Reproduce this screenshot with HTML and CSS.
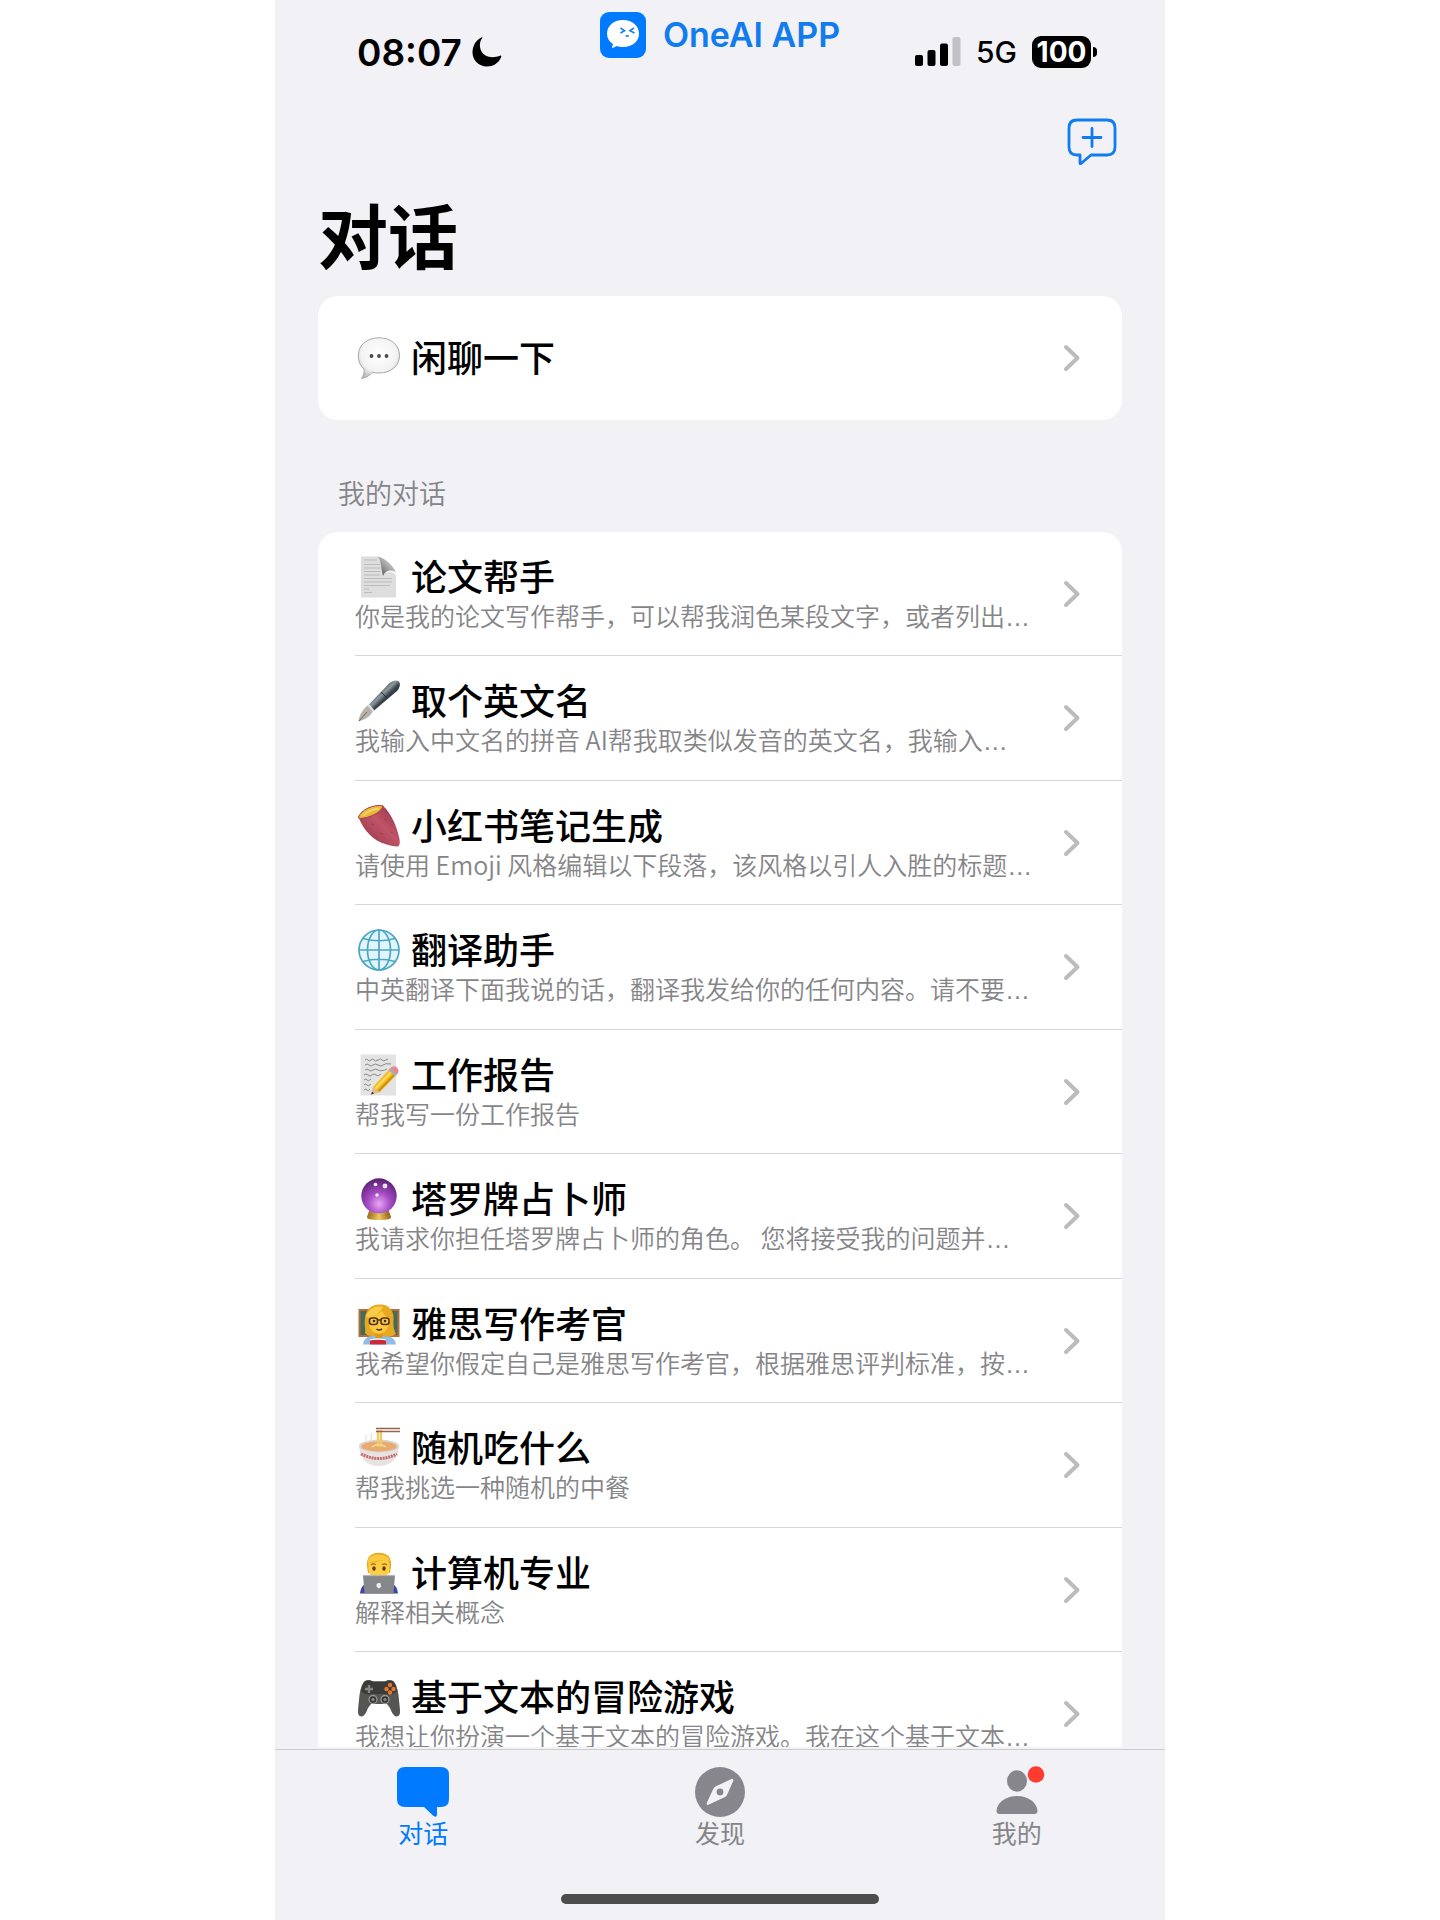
FILE: index.html
```html
<!DOCTYPE html>
<html lang="zh-CN">
<head>
<meta charset="utf-8">
<meta name="viewport" content="width=device-width, initial-scale=1">
<title>OneAI - 对话</title>
<link rel="stylesheet" href="styles.css">
</head>
<body>
<div class="app">
  <div class="screen">
    <header class="status">
      <div class="status-time">
        <time>08:07</time>
        <svg class="moon" viewBox="0 0 30 30" aria-hidden="true"><path d="M10.500 .8C6 6 7.500 15 13.500 18.500C18 21 23.500 20.500 28.500 18.600Q29.600 18.700 29.200 20C26.500 26.500 21 29.500 15 29.500C6.500 29.500 .5 23 .5 15.500C.5 8.500 4 2.800 9.500 .4Q10.600 0 10.500 .8Z"/></svg>
      </div>
      <div class="brand">
        <svg class="brand-logo" viewBox="0 0 46 46" aria-hidden="true">
          <rect width="46" height="46" rx="9" fill="#007aff"/>
          <path d="M23 8C32.500 8 39 14 39 21.700S32.500 35 23 35C20.500 35 18.500 34.600 17 34L12.500 36Q11.800 36.200 12 35.400L13 32C9 29.600 7 26 7 21.700C7 14 13.500 8 23 8Z" fill="#fff"/>
          <path d="M20.500 16L24.500 18.600L20.500 21M34 16L30 18.600L34.500 21M25.500 24H29" fill="none" stroke="#1b7af0" stroke-width="1.600"/>
        </svg>
        <span>OneAI APP</span>
      </div>
      <div class="status-icons">
        <svg class="signal" viewBox="0 0 46 30" aria-hidden="true"><rect x="0" y="18" width="8" height="11" rx="2"/><rect x="12.500" y="13" width="8" height="16" rx="2"/><rect x="25" y="6.500" width="8" height="22.500" rx="2"/><rect x="37.500" y="0" width="8" height="29" rx="2" fill="#c1c1c6"/></svg>
        <span class="network">5G</span>
        <span class="battery">100</span>
      </div>
    </header>

    <main class="content">
      <nav class="toolbar">
        <button class="compose" type="button" aria-label="新建对话">
          <svg viewBox="0 0 50 48" aria-hidden="true"><path d="M10 2H40Q48 2 48 10V29Q48 37 40 37H24L14 45.500Q13 46 13 45V37H10Q2 37 2 29V10Q2 2 10 2ZM25 10.500V28.500M16 19.500H34" fill="none" stroke="#0f7cf0" stroke-width="2.800" stroke-linecap="round" stroke-linejoin="round"/></svg>
        </button>
      </nav>
      <h1 class="title">对话</h1>

      <ul class="card">
        <li class="row row-single"><a href="#chat">
          <span class="row-title">
            <svg class="emoji" viewBox="0 0 46 42" aria-hidden="true">
              <defs><radialGradient id="bubble" cx=".5" cy=".4" r=".62"><stop offset="0" stop-color="#fff"/><stop offset=".7" stop-color="#f3f3f3"/><stop offset="1" stop-color="#bdbdbd"/></radialGradient></defs>
              <path d="M24 .8C36 .8 44.500 8 44.500 18.500S36 36 24 36C21.500 36 19.500 35.800 17.500 35.200C14.500 38.500 11 41 6.500 41.500C8.500 38.500 9.500 35.500 9 32C5.500 29 3.300 24.500 3.300 18.500C3.300 8 12 .8 24 .8Z" fill="url(#bubble)" stroke="#a9a9a9" stroke-width="1"/>
              <g fill="#4a4a4a"><circle cx="16.500" cy="19" r="1.900"/><circle cx="24" cy="19" r="1.900"/><circle cx="31.500" cy="19" r="1.900"/></g>
            </svg>
            <span class="row-name">闲聊一下</span></span>
          <svg class="chevron" viewBox="0 0 16 26" aria-hidden="true"><path d="M2 2L13.500 13L2 24"/></svg>
        </a></li>
      </ul>

      <h2 class="section">我的对话</h2>

      <ul class="card card-list">
        <li class="row"><a href="#paper">
          <span class="row-title">
            <svg class="emoji" viewBox="0 0 46 42" aria-hidden="true">
              <defs><linearGradient id="curl" x1="0" y1="1" x2="1" y2="0"><stop offset="0" stop-color="#444"/><stop offset=".5" stop-color="#a5a5a5"/><stop offset="1" stop-color="#f0f0f0"/></linearGradient></defs>
              <path d="M6 .5H23Q27 1 27.500 8L28 19Q35 12.500 41 19V41.500H6Z" fill="#dedede"/>
              <path d="M9 4H22M9 8.500H25M9 12H25M9 15.500H25M9 19H25M9 22.500H37M9 26H37M9 29.500H35M9 33H14M9 36.500H17" stroke="#bcbcbc" stroke-width="1"/>
              <path d="M22 .5C26 2 25.500 10 28 20C31 14 37 13 41 17C39 10 29 1 22 .5Z" fill="url(#curl)"/>
            </svg>
            <span class="row-name">论文帮手</span></span>
          <span class="row-sub">你是我的论文写作帮手，可以帮我润色某段文字，或者列出<span class="more">…</span></span>
          <svg class="chevron" viewBox="0 0 16 26" aria-hidden="true"><path d="M2 2L13.500 13L2 24"/></svg>
        </a></li>
        <li class="row"><a href="#name">
          <span class="row-title">
            <svg class="emoji" viewBox="0 0 46 42" aria-hidden="true">
              <defs><linearGradient id="pen" x1=".2" y1=".3" x2=".7" y2=".8"><stop offset="0" stop-color="#2d363c"/><stop offset=".4" stop-color="#8d989f"/><stop offset=".6" stop-color="#39444b"/><stop offset="1" stop-color="#1f272d"/></linearGradient></defs>
              <path d="M14 25L18 31C15 37 10 39.500 3.500 41.500C4 35.500 8 28 14 25Z" fill="#b9b1a9"/>
              <path d="M4 41L12 32" stroke="#6f6962" stroke-width="1"/>
              <path d="M13.500 25L34 3.500Q40-1.500 44 1.500Q46.500 6 42 11L18.500 31Z" fill="url(#pen)"/>
              <path d="M13.500 25L18.500 31" stroke="#dfe3e5" stroke-width="2"/><path d="M26 12L32 18" stroke="#232b30" stroke-width="1"/>
            </svg>
            <span class="row-name">取个英文名</span></span>
          <span class="row-sub">我输入中文名的拼音 AI帮我取类似发音的英文名，我输入<span class="more">…</span></span>
          <svg class="chevron" viewBox="0 0 16 26" aria-hidden="true"><path d="M2 2L13.500 13L2 24"/></svg>
        </a></li>
        <li class="row"><a href="#notes">
          <span class="row-title">
            <svg class="emoji" viewBox="0 0 46 42" aria-hidden="true">
              <defs><linearGradient id="potato" x1="0" y1="1" x2="1" y2="0"><stop offset="0" stop-color="#8e2f42"/><stop offset=".55" stop-color="#c05468"/><stop offset="1" stop-color="#8a3145"/></linearGradient></defs>
              <path d="M3.500 12C7 22 15 33 26 37.500C33 40 38 41.500 43 41.500Q45.500 40 44.500 34C42 22 36 8 28 .8Z" fill="url(#potato)"/>
              <path d="M3.500 12C6 5 18-1 28 .8C27 7 15 13 5 13.500Q3 13.500 3.500 12Z" fill="#e9b83a" stroke="#a8404d" stroke-width="1"/>
              <path d="M8 10.500C13 6 18 4 24 3.500" fill="none" stroke="#f5d568" stroke-width="2"/>
              <path d="M16 19L19 20M29 14L32 15M25 28L28 29M36 27L38 28" stroke="#a03c50" stroke-width="1"/>
            </svg>
            <span class="row-name">小红书笔记生成</span></span>
          <span class="row-sub">请使用 Emoji 风格编辑以下段落，该风格以引人入胜的标题<span class="more">…</span></span>
          <svg class="chevron" viewBox="0 0 16 26" aria-hidden="true"><path d="M2 2L13.500 13L2 24"/></svg>
        </a></li>
        <li class="row"><a href="#translate">
          <span class="row-title">
            <svg class="emoji" viewBox="0 0 46 42" aria-hidden="true">
              <g fill="none" stroke="#4ba6c4" stroke-width="1.700"><circle cx="24" cy="21" r="20" fill="#e3f5fc"/><ellipse cx="24" cy="21" rx="11.500" ry="20"/><path d="M24 1V41M4 21H44M8 9.500Q24 14 40 9.500M8 32.500Q24 28 40 32.500"/></g>
            </svg>
            <span class="row-name">翻译助手</span></span>
          <span class="row-sub">中英翻译下面我说的话，翻译我发给你的任何内容。请不要<span class="more">…</span></span>
          <svg class="chevron" viewBox="0 0 16 26" aria-hidden="true"><path d="M2 2L13.500 13L2 24"/></svg>
        </a></li>
        <li class="row"><a href="#report">
          <span class="row-title">
            <svg class="emoji" viewBox="0 0 46 42" aria-hidden="true">
              <rect x="5.500" y=".5" width="35.500" height="41" fill="#e3e3e3"/>
              <path d="M10 6q2-2 3 0t3 0 3 0 4 0 4 0 6-1M10 11q2-2 4 0t4 0 5 0 5 0 8-1M10 16q2-2 4 0t4 0 5 0 9-1M9 21q2-2 4 0t4 0 4 0 5-1M9 26q2-2 3 0t4-1M9 31q2-2 3 0t4-1M9 36q2-2 3 0t3-1" fill="none" stroke="#8a8a8a" stroke-width="1"/>
              <path d="M18 33L35 14.500L42 20.500L25 38L17 40Z" fill="#f2bd24"/><path d="M20 35L37.500 16.500" stroke="#ffdc59" stroke-width="2"/><path d="M23 37.500L40.500 19.500" stroke="#cf8b12" stroke-width="1.800"/>
              <path d="M18 33L25 38L16.500 40.500Z" fill="#dfbd8a"/><path d="M17 37.500L19 39.500L16 40.800Z" fill="#333"/>
              <path d="M33.500 16L36 13.500L42.500 19.500L40 22.500Z" fill="#a8adb0"/><path d="M35.500 14Q38 11 42 13.500Q45 17 42 20.500Z" fill="#e88792"/>
            </svg>
            <span class="row-name">工作报告</span></span>
          <span class="row-sub">帮我写一份工作报告</span>
          <svg class="chevron" viewBox="0 0 16 26" aria-hidden="true"><path d="M2 2L13.500 13L2 24"/></svg>
        </a></li>
        <li class="row"><a href="#tarot">
          <span class="row-title">
            <svg class="emoji" viewBox="0 0 46 42" aria-hidden="true">
              <defs><radialGradient id="orb" cx=".5" cy=".72" r=".7"><stop offset="0" stop-color="#e8a8f4"/><stop offset=".45" stop-color="#a64bc4"/><stop offset="1" stop-color="#5b2274"/></radialGradient><linearGradient id="gold"><stop offset="0" stop-color="#9b681c"/><stop offset=".5" stop-color="#efc85e"/><stop offset="1" stop-color="#93601a"/></linearGradient></defs>
              <path d="M14 33H34L36 39Q37 42 24 42T12 39Z" fill="url(#gold)"/>
              <circle cx="24" cy="18" r="17.700" fill="url(#orb)"/>
              <path d="M16 34Q24 37 32 34L34 37Q24 40 14 37Z" fill="url(#gold)"/>
              <g fill="#fff"><circle cx="20.500" cy="6.500" r="1.800"/><circle cx="30" cy="8" r="2.400" opacity=".85"/><circle cx="22" cy="17" r="1.700" opacity=".9"/></g>
            </svg>
            <span class="row-name">塔罗牌占卜师</span></span>
          <span class="row-sub">我请求你担任塔罗牌占卜师的角色。 您将接受我的问题并<span class="more">…</span></span>
          <svg class="chevron" viewBox="0 0 16 26" aria-hidden="true"><path d="M2 2L13.500 13L2 24"/></svg>
        </a></li>
        <li class="row"><a href="#ielts">
          <span class="row-title">
            <svg class="emoji" viewBox="0 0 46 42" aria-hidden="true">
              <rect x="4.500" y="7" width="39" height="26" fill="#476b59" stroke="#b1703d" stroke-width="2"/>
              <path d="M8 41.500Q9 33 18 33H30Q40 33 41 41.500Z" fill="#91bce8"/>
              <path d="M10 30C11 26 9 23 10 15C11 6 17 1 25 1.500C33 1 39 7 38.500 16C38 24 39 27 41 31Q35 35 30 33H17Q12 33 10 30Z" fill="#e8a922"/>
              <path d="M20 28H28V34Q24 37 20 34Z" fill="#d99b1e"/>
              <path d="M14 15Q23 13 27 8Q30 14 34 15V20Q32 30 24 31Q15 30 14 20Z" fill="#ffc93c"/>
              <path d="M11 13C14 5 22 2 28 4C25 10 20 14 13 15Z" fill="#f8cc4b"/>
              <g fill="none" stroke="#4d3325" stroke-width="1.600"><rect x="14.500" y="15" width="8" height="6.500" rx="2.500"/><rect x="26" y="15" width="8" height="6.500" rx="2.500"/><path d="M22.500 17H26M21.500 26Q24 28 27 26"/></g>
              <g fill="#40281c"><circle cx="19" cy="18" r="1.300"/><circle cx="30" cy="18" r="1.300"/></g>
              <path d="M15 37H31V41.500H15Z" fill="#cc2937"/><path d="M15 37Q23 35 31 37" fill="none" stroke="#fff" stroke-width="1.200"/>
            </svg>
            <span class="row-name">雅思写作考官</span></span>
          <span class="row-sub">我希望你假定自己是雅思写作考官，根据雅思评判标准，按<span class="more">…</span></span>
          <svg class="chevron" viewBox="0 0 16 26" aria-hidden="true"><path d="M2 2L13.500 13L2 24"/></svg>
        </a></li>
        <li class="row"><a href="#food">
          <span class="row-title">
            <svg class="emoji" viewBox="0 0 46 42" aria-hidden="true">
              <path d="M4 19C5 33 13 39 24 39S43 33 44 19Z" fill="#e6e3e1"/>
              <ellipse cx="24" cy="19" rx="20" ry="6.500" fill="#dcd2c9"/><ellipse cx="24" cy="19.500" rx="17.500" ry="5" fill="#e7aa70"/>
              <path d="M6 27Q24 36 42 27" fill="none" stroke="#c8686a" stroke-width="3" stroke-dasharray="2 .8"/>
              <path d="M23 3V20M26 3V20" stroke="#edc96c" stroke-width="2.400"/><path d="M17 20Q24 15 31 20" fill="none" stroke="#f2d487" stroke-width="2"/>
              <path d="M21 1.500H45M21 4.500H45" stroke="#96604a" stroke-width="1.400"/>
              <path d="M12 15Q9 11 12 8M17 14Q15 10 17 6" fill="none" stroke="#e9e9e9" stroke-width="1.500"/>
            </svg>
            <span class="row-name">随机吃什么</span></span>
          <span class="row-sub">帮我挑选一种随机的中餐</span>
          <svg class="chevron" viewBox="0 0 16 26" aria-hidden="true"><path d="M2 2L13.500 13L2 24"/></svg>
        </a></li>
        <li class="row"><a href="#computer">
          <span class="row-title">
            <svg class="emoji" viewBox="0 0 46 42" aria-hidden="true">
              <path d="M5 41.500Q6 33 12 31H36Q42 33 43 41.500Z" fill="#3e45a8"/>
              <path d="M12 14Q11 1 24 .8Q37 1 36 14L35 21H13Z" fill="#e6a91f"/>
              <path d="M13.500 11Q24 10 31 7L34.500 11V18Q34 25 24 26Q14 25 13.500 18Z" fill="#ffce41"/>
              <path d="M13 11Q12 3 24 2.500Q33 2.500 35 9Q25 7 13 11Z" fill="#fbc93f"/>
              <g fill="#563518"><ellipse cx="19" cy="16.500" rx="1.700" ry="2.300"/><ellipse cx="29" cy="16.500" rx="1.700" ry="2.300"/></g><path d="M16 13Q18 11 21 12.500M27 12.500Q30 11 32 13" fill="none" stroke="#a76816" stroke-width="1.300"/>
              <path d="M8 23.500H40L38.500 41.500H9.500Z" fill="#85878b"/><path d="M8 23.500H40" stroke="#b3b5b8" stroke-width="1.200"/><path d="M22 31.500Q24 30.500 26 31.500Q25 33 26.300 34.500Q24.500 37 23 36Q20.500 34 22 31.500Z" fill="#eee"/>
            </svg>
            <span class="row-name">计算机专业</span></span>
          <span class="row-sub">解释相关概念</span>
          <svg class="chevron" viewBox="0 0 16 26" aria-hidden="true"><path d="M2 2L13.500 13L2 24"/></svg>
        </a></li>
        <li class="row"><a href="#adventure">
          <span class="row-title">
            <svg class="emoji" viewBox="0 0 46 42" aria-hidden="true">
              <path d="M10 5Q14 3.500 18 5.500H30Q34 3.500 38 5Q42 8 43.500 19L45 34Q45.500 41 41 40.500Q38 40 35 32L32 28H16L13 32Q10 40 7 40.500Q2.500 41 3 34L4.500 19Q6 8 10 5Z" fill="#555653"/>
              <path d="M10 5Q14 3.500 18 5.500H30Q34 3.500 38 5Q41 8 42 15Q37 20 30 18H18Q11 20 6 15Q7 8 10 5Z" fill="#3b3c3a"/>
              <path d="M14 9V17M10 13H18" stroke="#858680" stroke-width="2.400"/>
              <g fill="#e4762c"><circle cx="35" cy="9" r="2.200"/><circle cx="31.500" cy="13" r="2.200"/><circle cx="38.500" cy="13" r="2.200"/><circle cx="35" cy="16.500" r="2.200"/></g>
              <g fill="#363735" stroke="#969791" stroke-width="1.300"><circle cx="18" cy="23.500" r="4"/><circle cx="30" cy="23.500" r="4"/></g><g fill="#8b8c87"><circle cx="18" cy="23.500" r="1.600"/><circle cx="30" cy="23.500" r="1.600"/></g>
            </svg>
            <span class="row-name">基于文本的冒险游戏</span></span>
          <span class="row-sub">我想让你扮演一个基于文本的冒险游戏。我在这个基于文本<span class="more">…</span></span>
          <svg class="chevron" viewBox="0 0 16 26" aria-hidden="true"><path d="M2 2L13.500 13L2 24"/></svg>
        </a></li>
      </ul>
    </main>
  </div>

  <footer class="tabbar">
    <nav class="tabs">
      <a class="tab tab-active" href="#chats">
        <svg viewBox="0 0 52 50" aria-hidden="true"><path d="M8 0H44Q52 0 52 8V32Q52 40 44 40H40V48Q39.500 51 36.500 49L27 40H8Q0 40 0 32V8Q0 0 8 0Z"/></svg>
        对话</a>
      <a class="tab" href="#discover">
        <svg viewBox="0 0 52 50" aria-hidden="true"><path fill-rule="evenodd" d="M26 0A25 25 0 1 1 26 50A25 25 0 1 1 26 0ZM38 11.800L21.500 19.500Q20 20.300 19.200 22L12.700 36Q12.500 38.500 14.500 37.800L31 30Q32.300 29.400 33 28L39.300 13.800Q39.500 11.500 38 11.800Z"/><circle cx="26" cy="25" r="3.400"/></svg>
        发现</a>
      <a class="tab" href="#me">
        <svg viewBox="0 0 52 50" aria-hidden="true"><ellipse cx="26" cy="14" rx="10" ry="10.700"/><path d="M26 29C38 29 46 36 46.500 44Q46.300 47 43.500 47H8.500Q5.700 47 5.500 44C6 36 14 29 26 29Z"/><circle cx="45" cy="7.500" r="8.300" fill="#ff3b30"/></svg>
        我的</a>
    </nav>
    <div class="home-indicator"></div>
  </footer>
</div>
</body>
</html>
```
FILE: styles.css
```css
* {
  box-sizing: border-box;
}

body {
  margin: 0;
  background: #fff;
  color: #000;
  font-family: "Noto Sans CJK SC", sans-serif;
}

h1, h2, ul {
  margin: 0;
  padding: 0;
}

ul {
  list-style: none;
}

a {
  color: inherit;
  text-decoration: none;
}

svg {
  display: block;
  flex: none;
  overflow: visible;
}

.app {
  display: flex;
  flex-direction: column;
  max-width: 890px;
  height: 100vh;
  margin: 0 auto;
  background: #f1f1f6;
}

.screen {
  flex: 1;
  min-height: 0;
  overflow-y: auto;
  scrollbar-width: none;
}

/* Status bar */
.status {
  display: grid;
  grid-template-columns: 1fr auto 1fr;
  align-items: center;
  height: 104px;
  padding: 0 68px;
  font-family: Inter, "Noto Sans CJK SC", sans-serif;
}

.status-time,
.status-icons,
.brand {
  display: flex;
  align-items: center;
}

.status-time {
  gap: 10px;
  padding-left: 14px;
  font-size: 37px;
  font-weight: 600;
}

.moon {
  width: 30px;
  height: 30px;
}

.brand {
  align-self: start;
  gap: 17px;
  padding-top: 12px;
  color: #127bee;
  font-size: 34px;
  font-weight: 600;
  line-height: 46px;
}

.brand-logo {
  width: 46px;
  height: 46px;
}

.status-icons {
  justify-content: flex-end;
  gap: 15px;
}

.signal {
  width: 46px;
  height: 30px;
}

.network {
  font-size: 30px;
  font-weight: 500;
}

.battery {
  position: relative;
  width: 59px;
  margin-right: 6px;
  border-radius: 9px;
  background: #000;
  color: #fff;
  font-size: 28px;
  font-weight: 700;
  line-height: 32px;
  text-align: center;
}

.battery::after {
  content: "";
  position: absolute;
  top: 11px;
  right: -6px;
  width: 4px;
  height: 10px;
  border-radius: 0 4px 4px 0;
  background: #000;
}

/* Page content */
.content {
  padding: 0 43px;
}

.toolbar {
  display: flex;
  justify-content: flex-end;
  align-items: center;
  height: 76px;
  padding-right: 5px;
}

.compose {
  padding: 0;
  border: 0;
  background: none;
}

.compose svg {
  width: 50px;
  height: 48px;
}

.title {
  padding-bottom: 8px;
  font-size: 70px;
  font-weight: 700;
  line-height: 108px;
}

.section {
  padding: 54px 20px 20px;
  color: #858589;
  font-size: 27px;
  font-weight: 350;
  line-height: 38px;
}

.card {
  display: grid;
  grid-auto-rows: 124px;
  overflow: hidden;
  border-radius: 20px;
  background: #fff;
}

.card-list {
  grid-auto-rows: 124px 125px;
}

.row {
  padding-left: 37px;
}

.row a {
  display: grid;
  grid-template-columns: 1fr auto;
  grid-template-rows: 42px 34px;
  align-content: start;
  height: 100%;
  padding: 24px 42px 0 0;
  border-bottom: 1px solid #d6d6d9;
}

.row-single a {
  grid-template-rows: 42px;
  align-content: center;
  padding-top: 0;
}

.row:last-child a {
  border-bottom: 0;
}

.row-title {
  display: flex;
  align-items: flex-start;
  gap: 10px;
  font-size: 36px;
  font-weight: 500;
  line-height: 38px;
  white-space: nowrap;
}

.emoji {
  width: 46px;
  height: 42px;
}

.row-sub {
  grid-row: 2;
  color: #858588;
  font-size: 25px;
  font-weight: 350;
  line-height: 34px;
  white-space: nowrap;
}

.more {
  font-family: "Liberation Sans", sans-serif;
}

.chevron {
  grid-column: 2;
  grid-row: 1 / -1;
  align-self: center;
  width: 16px;
  height: 26px;
  fill: none;
  stroke: #bcbcbf;
  stroke-width: 4;
  stroke-linecap: round;
  stroke-linejoin: round;
}

/* Tab bar */
.tabbar {
  padding: 2px 0 16px;
}

.tabs {
  display: grid;
  grid-template-columns: repeat(3, 1fr);
  padding-top: 17px;
  border-top: 1px solid #cbcbd0;
}

.tab {
  display: flex;
  flex-direction: column;
  align-items: center;
  color: #858589;
  font-size: 25px;
  line-height: 30px;
}

.tab svg {
  width: 52px;
  height: 50px;
  fill: #87868c;
}

.tab-active {
  color: #007aff;
}

.tab-active svg {
  fill: #007aff;
}

.home-indicator {
  width: 318px;
  height: 10px;
  margin: 47px auto 0;
  border-radius: 5px;
  background: #4d4d4d;
}
```
